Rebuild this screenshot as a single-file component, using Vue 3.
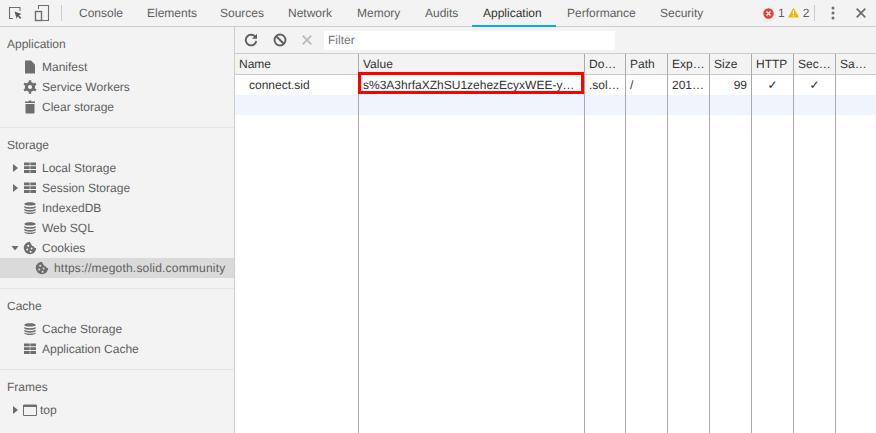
<script setup>
const tabs = [
  { label:'Console', w:68 }, { label:'Elements', w:73 }, { label:'Sources', w:68 },
  { label:'Network', w:69 }, { label:'Memory', w:68 }, { label:'Audits', w:58 },
  { label:'Application', w:84 }, { label:'Performance', w:93 }, { label:'Security', w:70 },
]
const columns = [
  { name:'Name', w:124, text:'connect.sid', cls:'name' },
  { name:'Value', w:226, text:'s%3A3hrfaXZhSU1zehezEcyxWEE-y…', cls:'value' },
  { name:'Do…', w:41, text:'.sol…' },
  { name:'Path', w:42, text:'/' },
  { name:'Exp…', w:42, text:'201…' },
  { name:'Size', w:42, text:'99', cls:'num' },
  { name:'HTTP', w:42, text:'✓', cls:'check' },
  { name:'Sec…', w:42, text:'✓', cls:'check' },
  { name:'Sa…', w:40, text:'' },
]
const gridPath = 'M1 1.500h5.700v2.800H1zM7.300 1.500H13v2.800H7.300zM1 5.300h5.700v2.800H1zM7.300 5.300H13v2.800H7.300zM1 9.100h5.700v2.800H1zM7.300 9.100H13v2.800H7.300z'
const dbPath = 'M1.300 2.900C1.300 .8 12.700 .8 12.700 2.900 12.700 5 1.300 5 1.300 2.900zM1.300 5c2 1.600 9.400 1.600 11.400 0v1.400c-1 1.900-10.400 1.900-11.400 0zM1.300 7.800c2 1.600 9.400 1.600 11.400 0v1.400c-1 1.900-10.400 1.900-11.400 0zM1.300 10.600c2 1.600 9.400 1.600 11.400 0v.6c-1 2.400-10.400 2.400-11.400 0z'
const cookiePath = 'M7 .8a6.200 6.200 0 1 0 6.200 6.200c-1.300.2-2.300-.6-2.500-1.800C9.300 5.300 8.200 4.200 8.300 2.800 7.500 2.700 7 1.800 7 .8z'
</script>

<template>
  <div class="app">
    <header class="topbar">
      <div class="tool-icons">
        <svg width="16" height="16" viewBox="0 0 16 16"><path d="M5 13.500H1.500V2.500H12V6" fill="none" stroke="#6e6e6e" stroke-width="1.100"/><path d="M6.500 6.500l7 2.600-2.600 1.100 2.400 2.600-1.200 1.100-2.300-2.600-1.100 2.500z" fill="#5a5a5a"/></svg>
        <svg width="16" height="18" viewBox="0 0 16 18"><path d="M4.500 5V1.500h10v15H8" fill="none" stroke="#6e6e6e" stroke-width="1.100"/><rect x="1.500" y="7.500" width="6" height="9" fill="#f3f3f3" stroke="#6e6e6e" stroke-width="1.400"/></svg>
      </div>
      <span class="vsep"></span>
      <nav class="tabs">
        <span v-for="t in tabs" :key="t.label" class="tab" :class="{active:t.label==='Application'}" :style="{ width: t.w + 'px' }">{{ t.label }}</span>
      </nav>
      <div class="status">
        <svg width="11" height="11" viewBox="0 0 11 11"><circle cx="5.500" cy="5.500" r="5.200" fill="#e0433a"/><path d="M3.500 3.500l4 4M7.500 3.500l-4 4" stroke="#fff" stroke-width="1.400"/></svg>
        <span class="count">1</span>
        <svg class="warn" width="11" height="11" viewBox="0 0 11 11"><path d="M5.500 .5L11 10.500H0z" fill="#f4b400"/><path d="M5.500 3.500v3.800M5.500 8v1.500" stroke="#fff" stroke-width="1.300"/></svg>
        <span class="count">2</span>
        <span class="vsep small"></span>
        <svg class="dots" width="4" height="14" viewBox="0 0 4 14"><circle cx="2" cy="2" r="1.500" fill="#6e6e6e"/><circle cx="2" cy="7" r="1.500" fill="#6e6e6e"/><circle cx="2" cy="12" r="1.500" fill="#6e6e6e"/></svg>
        <svg class="close" width="10" height="10" viewBox="0 0 10 10"><path d="M.7.7l8.600 8.600M9.300.7L.7 9.300" stroke="#6e6e6e" stroke-width="1.800"/></svg>
      </div>
    </header>

    <div class="main">
      <aside class="sidebar">
        <section class="sec">
          <h3>Application</h3>
          <div class="item"><span class="arrow"></span><svg class="ic" viewBox="0 0 14 14"><path d="M2 .5h6l4 4v9H2z" fill="#6e6e6e"/></svg>Manifest</div>
          <div class="item"><span class="arrow"></span><svg class="ic" viewBox="0 0 14 14"><circle cx="7" cy="7" r="3.600" fill="none" stroke="#6e6e6e" stroke-width="3"/><path d="M7 .2v13.600M1.100 3.600l11.800 6.800M1.100 10.400l11.800-6.800" stroke="#6e6e6e" stroke-width="2.400" stroke-dasharray="2.600 8.400"/></svg>Service Workers</div>
          <div class="item"><span class="arrow"></span><svg class="ic" viewBox="0 0 14 14"><path d="M2 1.500h3.500l.5-1h2l.5 1H12V3H2zM2.500 4h9v8.500a1 1 0 0 1-1 1h-7a1 1 0 0 1-1-1z" fill="#6e6e6e"/></svg>Clear storage</div>
        </section>
        <section class="sec">
          <h3>Storage</h3>
          <div class="item"><span class="arrow right"></span><svg class="ic" viewBox="0 0 14 14"><path :d="gridPath" fill="#6e6e6e"/></svg>Local Storage</div>
          <div class="item"><span class="arrow right"></span><svg class="ic" viewBox="0 0 14 14"><path :d="gridPath" fill="#6e6e6e"/></svg>Session Storage</div>
          <div class="item"><span class="arrow"></span><svg class="ic" viewBox="0 0 14 14"><path :d="dbPath" fill="#6e6e6e"/></svg>IndexedDB</div>
          <div class="item"><span class="arrow"></span><svg class="ic" viewBox="0 0 14 14"><path :d="dbPath" fill="#6e6e6e"/></svg>Web SQL</div>
          <div class="item"><span class="arrow down"></span><svg class="ic" viewBox="0 0 14 14"><path :d="cookiePath" fill="#6e6e6e"/><circle cx="5.200" cy="4.800" r="1.100" fill="#f3f3f3"/><circle cx="8.600" cy="7.400" r="1" fill="#f3f3f3"/><circle cx="4.200" cy="8.600" r="1" fill="#f3f3f3"/><circle cx="7.600" cy="10.800" r="1" fill="#f3f3f3"/></svg>Cookies</div>
          <div class="item sel"><svg class="ic" viewBox="0 0 14 14"><path :d="cookiePath" fill="#6e6e6e"/><circle cx="5.200" cy="4.800" r="1.100" fill="#dadada"/><circle cx="8.600" cy="7.400" r="1" fill="#dadada"/><circle cx="4.200" cy="8.600" r="1" fill="#dadada"/><circle cx="7.600" cy="10.800" r="1" fill="#dadada"/></svg><span class="url">https://megoth.solid.community</span></div>
        </section>
        <section class="sec">
          <h3>Cache</h3>
          <div class="item"><span class="arrow"></span><svg class="ic" viewBox="0 0 14 14"><path :d="dbPath" fill="#6e6e6e"/></svg>Cache Storage</div>
          <div class="item"><span class="arrow"></span><svg class="ic" viewBox="0 0 14 14"><path :d="gridPath" fill="#6e6e6e"/></svg>Application Cache</div>
        </section>
        <section class="sec last">
          <h3>Frames</h3>
          <div class="item top"><span class="arrow right"></span><svg class="ic" viewBox="0 0 14 14"><path d="M.5 2h13v10.500H.5z" fill="none" stroke="#6e6e6e" stroke-width="1"/><path d="M.5 2h13v2H.5z" fill="#6e6e6e"/></svg>top</div>
        </section>
      </aside>

      <div class="content">
        <div class="filterbar">
          <svg class="b1" width="14" height="14" viewBox="0 0 14 14"><path d="M11.600 4.300A5.300 5.300 0 1 0 12.300 8" fill="none" stroke="#5f5f5f" stroke-width="1.900"/><path d="M13 .8v5H8z" fill="#5f5f5f"/></svg>
          <svg class="b2" width="14" height="14" viewBox="0 0 14 14"><circle cx="7" cy="7" r="5.500" fill="none" stroke="#5f5f5f" stroke-width="1.900"/><path d="M3 3l8 8" stroke="#5f5f5f" stroke-width="1.900"/></svg>
          <svg class="b3" width="10" height="10" viewBox="0 0 10 10"><path d="M.7.7l8.600 8.600M9.300.7L.7 9.300" stroke="#bcbcbc" stroke-width="1.800"/></svg>
          <div class="filter">Filter</div>
        </div>
        <div class="grid">
          <div v-for="c in columns" :key="c.name" class="col" :style="{ width: c.w + 'px' }">
            <div class="head">{{ c.name }}</div>
            <div class="cell" :class="c.cls">{{ c.text }}<span v-if="c.cls==='value'" class="mark"></span></div>
            <div class="cell blue"></div>
          </div>
        </div>
      </div>
    </div>
  </div>
</template>

<style scoped>
.app { width:876px; height:433px; background:#fff; font:12px "Liberation Sans", Arial, sans-serif; text-rendering:geometricPrecision; color:#5f5f5f; overflow:hidden; display:flex; flex-direction:column; }
.topbar { height:26px; flex:none; background:#f3f3f3; border-bottom:1px solid #ccc; display:flex; align-items:center; position:relative; }
.tool-icons { display:flex; align-items:center; padding-left:8px; gap:10px; width:51px; box-sizing:border-box; }
.vsep { width:1px; height:16px; background:#ccc; margin-left:10px; }
.tabs { display:flex; margin-left:5px; height:26px; }
.tab { padding-left:12px; box-sizing:border-box; line-height:26px; white-space:nowrap; height:26px; color:#5f5f5f; }
.tab.active { color:#333; border-bottom:2px solid #03a9f4; height:27px; margin-left:1px; margin-right:-1px; padding-left:11px; }
.status { position:absolute; left:763px; top:0; height:26px; display:flex; align-items:center; }
.count { margin-left:4px; }
.warn { margin-left:3px; margin-top:-2px; }
.vsep.small { margin-left:4.700px; }
.dots { margin-left:16px; }
.close { margin-left:21px; }
.main { flex:1; display:flex; min-height:0; }
.sidebar { width:234px; flex:none; background:#f3f3f3; border-right:1px solid #ccc; display:flex; flex-direction:column; }
.sec { padding:7px 0 10px; border-bottom:1px solid #e6e6e6; }
.sec.last { border:none; }
h3 { margin:0 0 3px; font-size:12px; font-weight:400; color:#5f5f5f; padding-left:7px; line-height:20px; }
.item { height:20px; display:flex; align-items:center; padding-left:11px; color:#5f5f5f; white-space:nowrap; }
.arrow { width:8px; height:10px; margin-right:4px; flex:none; }
.arrow.right { width:5px; height:8px; background:#6e6e6e; clip-path:polygon(0 0,100% 50%,0 100%); margin-left:2px; margin-right:5px; }
.arrow.down { width:8px; height:5px; background:#6e6e6e; clip-path:polygon(0 0,100% 0,50% 100%); margin-left:0; margin-right:4px; }
.ic { width:14px; height:14px; margin-right:5px; flex:none; }
.sel { background:#dadada; padding-left:35px; }
.url { letter-spacing:.2px; }
.top .ic { margin-right:3px; }
.content { flex:1; display:flex; flex-direction:column; min-width:0; }
.filterbar { height:26px; background:#f3f3f3; border-bottom:1px solid #ccc; display:flex; align-items:center; flex:none; }
.b1 { margin-left:9px; }
.b2 { margin-left:15px; }
.b3 { margin-left:15px; }
.filter { margin-left:12px; margin-top:1px; width:287px; padding-left:4px; height:19px; line-height:19px; background:#fff; color:#757575; }
.grid { flex:1; display:flex; }
.col { box-sizing:border-box; border-right:1px solid #aaa; flex:none; position:relative; }
.col:last-child { border-right:none; }
.head { height:20px; line-height:20px; padding-left:4px; background:#f3f3f3; border-bottom:1px solid #ccc; white-space:nowrap; overflow:hidden; color:#333; }
.cell { height:20px; line-height:20px; padding-left:4px; white-space:nowrap; color:#333; position:relative; }
.cell.name { padding-left:14px; }
.cell.num { text-align:right; padding-right:4px; }
.cell.check { text-align:center; padding-left:0; }
.cell.blue { background:#f0f5fd; }
.mark { position:absolute; left:-1px; top:-3px; width:226px; height:22px; box-sizing:border-box; border:3px solid #f00; }
</style>
